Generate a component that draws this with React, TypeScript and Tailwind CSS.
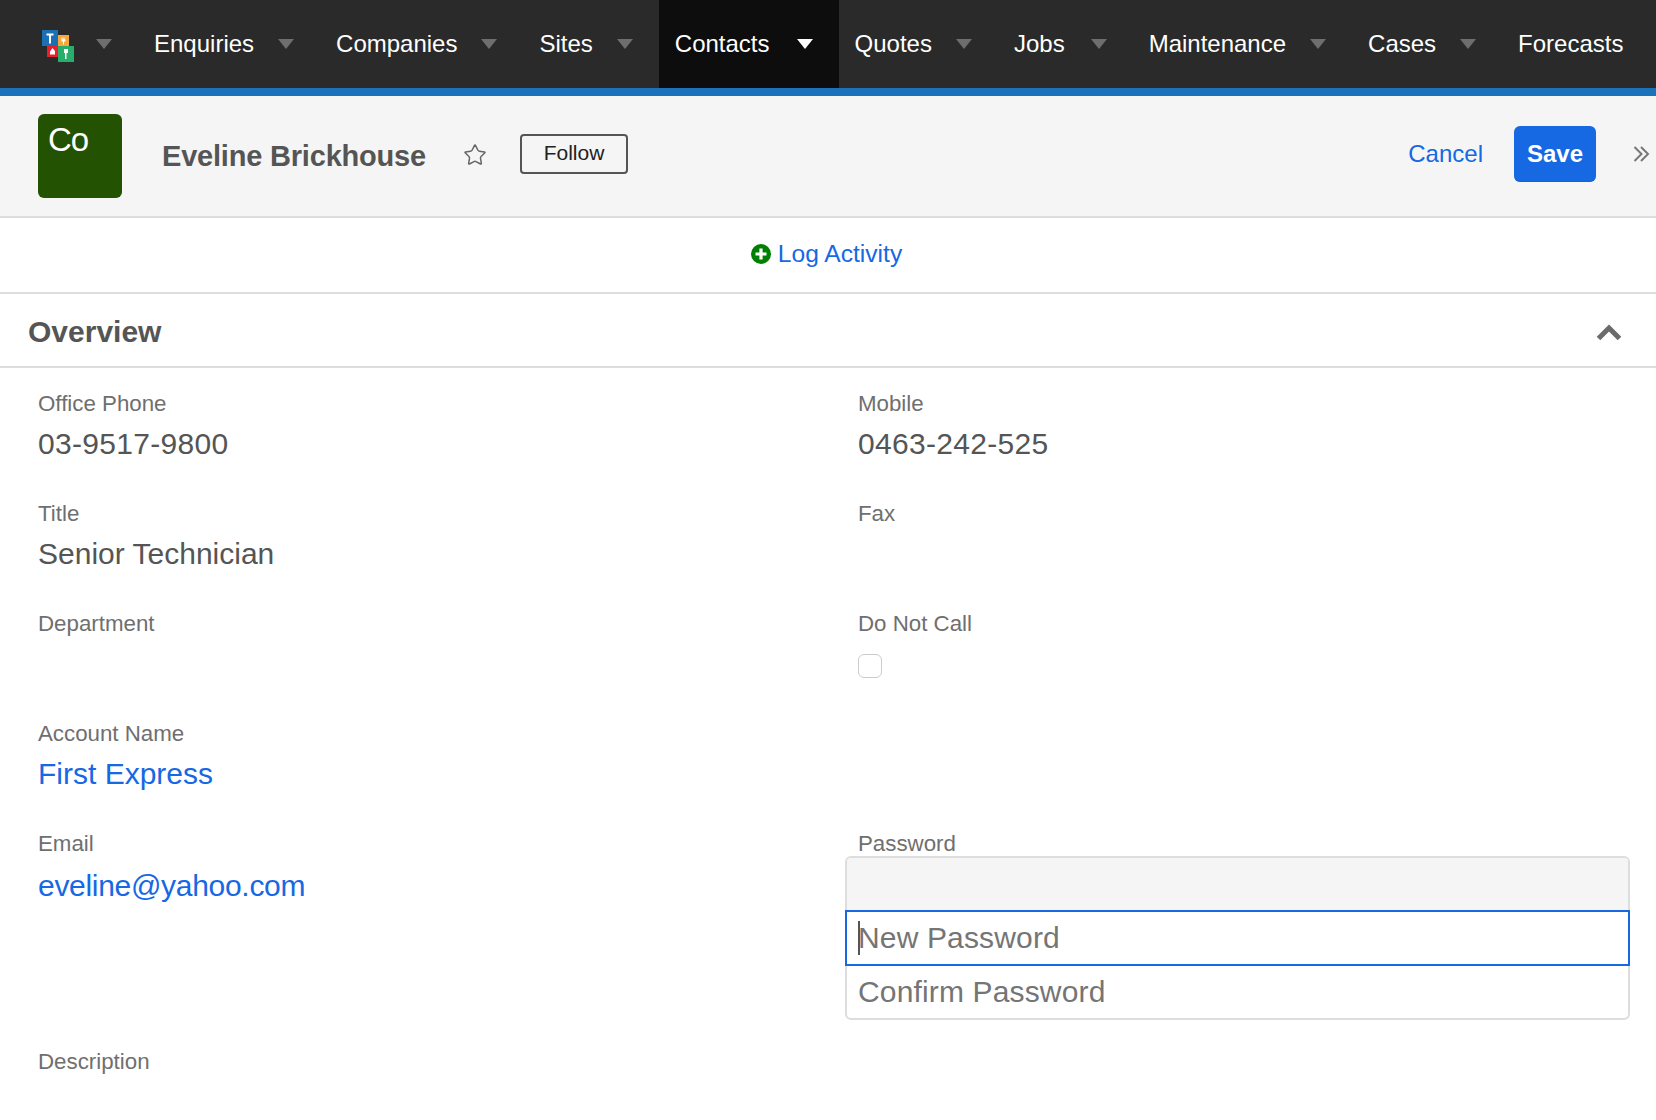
import { Star } from "lucide-react";

const navItems = [
  { label: "Enquiries", gap: "ml-6" },
  { label: "Companies", gap: "ml-6" },
  { label: "Sites", gap: "ml-6" },
  { label: "Contacts", gap: "ml-[27px]", active: true },
  { label: "Quotes", gap: "ml-6" },
  { label: "Jobs", gap: "ml-[26px]" },
  { label: "Maintenance", gap: "ml-6" },
  { label: "Cases", gap: "ml-6" },
  { label: "Forecasts" },
];

function Caret({ active }: { active?: boolean }) {
  return (
    <svg viewBox="0 0 16 10" className={active ? "w-4 h-[10px] fill-white" : "w-4 h-[10px] fill-[#6e6e6e]"}>
      <path d="M0 0h16L8 10z" />
    </svg>
  );
}

function Logo() {
  return (
    <svg viewBox="0 0 32 32" className="w-8 h-8">
      <rect x="0" y="0" width="16" height="16" fill="#1b6fb5" />
      <rect x="16" y="5" width="11" height="11" fill="#f5a83c" />
      <rect x="5" y="16" width="11" height="11" fill="#e8202e" />
      <rect x="16" y="16" width="16" height="16" fill="#27ae6a" />
      <path d="M4.5 3.5h7v2h-2.500v8h-2v-8h-2.500z" fill="#fff" />
      <path d="M19.500 7.500h1v2h1v-2h1v2h1v2h-1.500v3h-1v-3h-1.500z" fill="#fff" />
      <path d="M10.500 18l2.500 3v3.500h-5v-3z" fill="#fff" />
      <path d="M22 19h4v4h-1.500v6h-1.500v-6h-1z" fill="#fff" />
    </svg>
  );
}

function Field({ label, value, link, tracking }: { label: string; value?: string; link?: boolean; tracking?: string }) {
  return (
    <div className="h-[110px] pt-[21px]">
      <div className="h-[31px] text-[22.3px] leading-[30px] text-[#6f6f6f]">{label}</div>
      {value && (
        <div className={`h-12 text-[30px] leading-[48px] ${link ? "text-[#1668e3]" : "text-[#555]"} ${tracking ?? ""}`}>
          {value}
        </div>
      )}
    </div>
  );
}

export default function App() {
  return (
    <div className="min-h-[1120px] bg-white overflow-hidden font-['Liberation_Sans',Arial,sans-serif]">
      {/* Top nav */}
      <nav className="flex h-24 items-stretch bg-[#2a2a2a] border-b-8 border-[#1b72bb] text-white">
        <div className="flex items-center pl-[42px]">
          <div className="pt-1">
            <Logo />
          </div>
          <div className="ml-[22px] mr-[26px]">
            <Caret />
          </div>
        </div>
        {navItems.map((item) => (
          <div key={item.label} className={item.active ? "flex items-center pl-4 bg-[#0d0d0d]" : "flex items-center pl-4"}>
            <span className="text-[24px] leading-none">{item.label}</span>
            {item.gap && (
              <span className={`${item.gap} mr-[26px]`}>
                <Caret active={item.active} />
              </span>
            )}
          </div>
        ))}
      </nav>

      {/* Record header */}
      <header className="flex h-[122px] items-center bg-[#f5f5f5] border-b-2 border-[#dddddd] pl-[38px] pb-[2px]">
        <div className="w-[84px] h-[84px] mt-[2px] rounded-md bg-[#235203] pl-[10px] pt-[8px] text-[33px] leading-[36px] text-white tracking-[-1px]">
          Co
        </div>
        <h1 className="ml-10 mt-[2px] text-[29px] font-bold leading-none text-[#555] tracking-[-0.2px]">Eveline Brickhouse</h1>
        <Star className="ml-[37px] w-[24px] h-[24px] text-[#666]" strokeWidth={1.5} />
        <button className="ml-[33px] w-[108px] h-10 mt-[-2px] pb-[3px] border-2 border-[#555] rounded text-[21px] leading-none text-[#222]">
          Follow
        </button>
        <div className="ml-auto flex items-center mt-[-2px]">
          <span className="text-[24px] leading-none text-[#1668e3]">Cancel</span>
          <button className="ml-[31px] w-[82px] h-14 rounded-md bg-[#1668e3] border-b border-[#1a60c8] text-[24px] font-bold leading-none text-white">
            Save
          </button>
          <svg viewBox="0 0 17 18" className="ml-[37px] mr-[6px] w-[17px] h-[18px] fill-none stroke-[#777] stroke-2">
            <path d="M1.500 2l7 7-7 7M8 2l7 7-7 7" />
          </svg>
        </div>
      </header>

      {/* Log activity */}
      <div className="flex h-[76px] items-center justify-center border-b-2 border-[#dddddd] pr-[3px] pb-[2px]">
        <svg viewBox="0 0 20 20" className="w-5 h-5">
          <circle cx="10" cy="10" r="10" fill="#008000" />
          <path d="M8.400 4.500h3.200v3.900h3.900v3.200h-3.900v3.900H8.400v-3.900H4.500V8.400h3.900z" fill="#fff" />
        </svg>
        <span className="ml-[7px] text-[24.6px] leading-none text-[#1668e3]">Log Activity</span>
      </div>

      {/* Overview */}
      <div className="flex h-[74px] items-center justify-between border-b-2 border-[#dddddd] pl-7 pr-[34px] pt-[3px]">
        <h2 className="text-[30px] font-bold leading-none text-[#555]">Overview</h2>
        <svg viewBox="0 0 26 18" className="w-[26px] h-[18px] fill-none stroke-[#6b6b6b] stroke-[5px]">
          <path d="M2.500 15.500L13 5l10.500 10.500" />
        </svg>
      </div>

      <div className="grid grid-cols-[820px_1fr] pl-[38px]">
        <Field label="Office Phone" value="03-9517-9800" tracking="tracking-[0.3px]" />
        <Field label="Mobile" value="0463-242-525" tracking="tracking-[0.3px]" />
        <Field label="Title" value="Senior Technician" />
        <Field label="Fax" />
        <Field label="Department" />
        <div className="h-[110px] pt-[21px]">
          <div className="h-[31px] text-[22.3px] leading-[30px] text-[#6f6f6f]">Do Not Call</div>
          <div className="mt-[14px] w-6 h-6 rounded-md border border-[#cccccc] bg-white" />
        </div>
        <Field label="Account Name" value="First Express" link />
        <div />
        <div className="h-[218px] pt-[21px]">
          <div className="h-[31px] text-[22.3px] leading-[30px] text-[#6f6f6f]">Email</div>
          <div className="mt-[2px] h-12 text-[30px] leading-[48px] text-[#1668e3] tracking-[-0.3px]">eveline@yahoo.com</div>
        </div>
        <div className="h-[218px] pt-[21px]">
          <div className="h-[31px] text-[22.3px] leading-[30px] text-[#6f6f6f]">Password</div>
          <div className="mt-[-4px] ml-[-13px] mr-[26px] rounded-md border-2 border-[#dddddd]">
            <div className="h-[52px] bg-[#f5f5f5] rounded-t" />
            <div className="flex h-[56px] items-center mx-[-2px] pl-[11px] border-2 border-[#1668e3]">
              <span className="w-[2px] h-[34px] mr-[-2px] bg-[#555]" />
              <span className="text-[30px] leading-none text-[#757575] tracking-[0.15px]">New Password</span>
            </div>
            <div className="flex h-[52px] items-center pl-[11px] text-[30px] leading-none text-[#757575] tracking-[0.15px]">
              Confirm Password
            </div>
          </div>
        </div>
        <Field label="Description" />
      </div>
    </div>
  );
}
